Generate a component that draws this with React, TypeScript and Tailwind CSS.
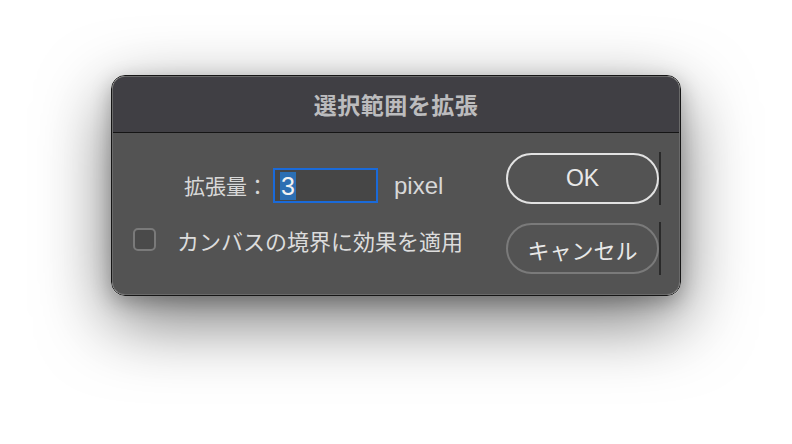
import React from "react";

const jp = { fontFamily: '"Noto Sans CJK JP", "Noto Sans", sans-serif' };
const latin = { fontFamily: '"Liberation Sans", Arial, sans-serif' };

export default function App() {
  return (
    <div className="w-[792px] h-[444px] bg-white overflow-hidden pt-[75px] pl-[111px]" style={jp}>
      <div className="w-[570px] h-[221px] rounded-[14px] border border-[#161616] shadow-[0_24px_70px_rgba(0,0,0,0.55),0_6px_20px_rgba(0,0,0,0.25)]">
        <div className="w-full h-full rounded-[13px] border border-[#6a6a6a] overflow-hidden flex flex-col bg-[#535353]">
          <div className="h-[56px] shrink-0 bg-[#403f44] border-b border-[#151515] flex items-center justify-center">
            <span className="text-[23px] font-bold text-[#bcbcbe] tracking-[0.5px] leading-none">選択範囲を拡張</span>
          </div>
          <div className="flex-1 flex">
            <div className="flex-1 flex flex-col">
              <div className="flex items-center pl-[71px] pt-[35px]">
                <span className="text-[21px] text-[#d8d8d8] leading-none w-[89px]">拡張量：</span>
                <div className="w-[105px] h-[35px] border-2 border-[#1a6ad9] bg-[#464646] flex items-center pl-[5px]">
                  <span className="bg-[#2c6fb3] text-[#f2f2f2] text-[25px] leading-[28px] px-[1px]" style={latin}>3</span>
                </div>
                <span className="ml-[16px] text-[24px] text-[#d8d8d8] leading-none" style={latin}>pixel</span>
              </div>
              <div className="flex items-center pl-[20px] mt-[25px]">
                <div className="w-[23px] h-[23px] rounded-[5px] border-2 border-[#7a7a7a] bg-[#4a4a4a]"></div>
                <span className="ml-[21px] text-[22px] text-[#dcdcdc] leading-none">カンバスの境界に効果を適用</span>
              </div>
            </div>
            <div className="w-[173px] shrink-0 flex flex-col pt-[20px]">
              <div className="flex">
                <div className="w-[153px] h-[51px] rounded-full border-2 border-[#e2e2e2] flex items-center justify-center">
                  <span className="text-[23px] text-[#e8e8e8] leading-none" style={latin}>OK</span>
                </div>
                <div className="w-[1.5px] h-[53px] bg-[#2a2a2a] -mt-[1px]"></div>
              </div>
              <div className="flex mt-[18px]">
                <div className="w-[153px] h-[51px] rounded-full border-2 border-[#7a7a7a] flex items-center justify-center">
                  <span className="text-[22px] text-[#e8e8e8] leading-none">キャンセル</span>
                </div>
                <div className="w-[1.5px] h-[53px] bg-[#2a2a2a] -mt-[1px]"></div>
              </div>
            </div>
          </div>
        </div>
      </div>
    </div>
  );
}
